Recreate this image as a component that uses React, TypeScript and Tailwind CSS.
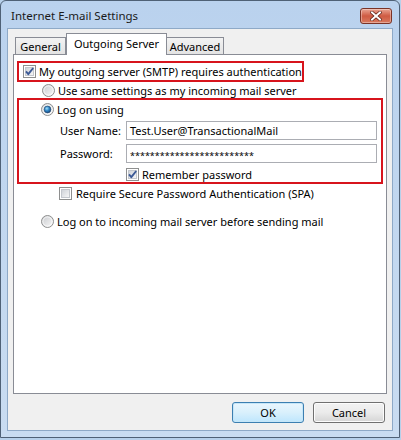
import React from 'react';

function CheckBox({ checked }: { checked?: boolean }) {
  return (
    <svg width="13" height="13" viewBox="0 0 13 13" className="shrink-0">
      <defs>
        <linearGradient id="cbInner" x1="0" y1="0" x2="1" y2="1">
          <stop offset="0" stopColor="#cdd1d7" />
          <stop offset="1" stopColor="#f8f8f8" />
        </linearGradient>
      </defs>
      <rect x="0.5" y="0.5" width="12" height="12" fill="#fff" stroke="#8e8f8f" />
      <rect x="2.5" y="2.5" width="8" height="8" fill="url(#cbInner)" stroke="#c3c7cd" />
      {checked && (
        <path d="M3 6.4 L5.3 9.2 L10.2 3" fill="none" stroke="#3c5a96" strokeWidth="1.9" strokeLinejoin="round" />
      )}
    </svg>
  );
}

function Radio({ checked }: { checked?: boolean }) {
  return (
    <svg width="13" height="13" viewBox="0 0 13 13" className="shrink-0">
      <defs>
        <linearGradient id="rbFill" x1="0" y1="0" x2="1" y2="1">
          <stop offset="0" stopColor="#c6c8cc" />
          <stop offset="1" stopColor="#fafafa" />
        </linearGradient>
        <radialGradient id="rbDot" cx="0.4" cy="0.35" r="0.75">
          <stop offset="0" stopColor="#a4e0fb" />
          <stop offset="0.45" stopColor="#2f86c6" />
          <stop offset="1" stopColor="#12386a" />
        </radialGradient>
      </defs>
      <circle cx="6.5" cy="6.5" r="6" fill="url(#rbFill)" stroke="#8e8f8f" />
      <circle cx="6.5" cy="6.5" r="4.6" fill="none" stroke="#ffffff" strokeOpacity="0.7" />
      {checked && <circle cx="6.5" cy="6.5" r="3.4" fill="url(#rbDot)" stroke="#23466f" strokeWidth="0.6" />}
    </svg>
  );
}

function CloseButton() {
  return (
    <div className="w-[32px] h-[16px] rounded-[3px] border border-[#7a3327] bg-gradient-to-b from-[#e8a493] via-[#cf5a42] to-[#d87a5f] flex items-center justify-center shadow-[inset_0_0_0_1px_rgba(255,255,255,0.35)]">
      <svg width="12" height="10" viewBox="0 0 12 10">
        <path d="M2 1.5 L10 8.5 M10 1.5 L2 8.5" stroke="#5a1f16" strokeWidth="3.4" strokeLinecap="square" />
        <path d="M2 1.5 L10 8.5 M10 1.5 L2 8.5" stroke="#ffffff" strokeWidth="2" strokeLinecap="square" />
      </svg>
    </div>
  );
}

function Button({ label, isDefault }: { label: string; isDefault?: boolean }) {
  return (
    <button
      className={`w-[72px] h-[21px] rounded-[3px] border text-[11px] text-black bg-gradient-to-b ${
        isDefault
          ? 'border-[#3c7fb1] from-[#eaf6fd] via-[#d9f0fc] to-[#bee6fd] shadow-[inset_0_0_0_1px_#c6e6f8]'
          : 'border-[#707070] from-[#f2f2f2] via-[#ebebeb] to-[#d5d5d5] shadow-[inset_0_0_0_1px_#fcfcfc]'
      }`}
    >
      {label}
    </button>
  );
}

export default function App() {
  return (
    <div className="w-[401px] h-[440px] bg-[#b7d0ea] font-['Noto_Sans',sans-serif] text-[11px] text-black leading-none whitespace-nowrap">
      <div className="w-[400px] h-[438px] border border-[#4f6176] rounded-t-[6px] bg-gradient-to-b from-[#bad2ee] to-[#c9dcf1] flex flex-col px-[6px] pb-[6px]">
        {/* title bar */}
        <div className="h-[27px] -mx-[6px] flex items-center pl-[10px] pr-[7px] pt-[3px]">
          <span className="text-[11.5px] text-[#1a1a1a]">Internet E-mail Settings</span>
          <div className="ml-auto self-start mt-[4px]">
            <CloseButton />
          </div>
        </div>

        {/* client area */}
        <div className="flex-1 border border-[#8ea9c7] bg-[#f0f0f0] flex flex-col pt-[4px]">
          {/* tabs */}
          <div className="h-[21px] flex items-end pl-[7px]">
            <div className="w-[51px] h-[17px] border border-b-0 border-[#898c95] bg-gradient-to-b from-[#f3f3f3] to-[#e3e3e3] flex items-center justify-center">
              General
            </div>
            <div className="relative z-10 w-[101px] h-[22px] -mb-px border border-b-0 border-[#898c95] bg-white flex items-center justify-center pb-[3px]">
              Outgoing Server
            </div>
            <div className="w-[57px] h-[17px] border border-b-0 border-l-0 border-[#898c95] bg-gradient-to-b from-[#f3f3f3] to-[#e3e3e3] flex items-center justify-center">
              Advanced
            </div>
          </div>

          {/* panel */}
          <div className="ml-[5px] w-[374px] h-[340px] border border-[#898c95] bg-white flex flex-col">
            <div className="ml-[3px] mt-[6px] w-[287px] h-[21px] border-2 border-[#d7141c] flex items-center gap-[3px] pl-[4px]">
              <CheckBox checked />
              <span>My outgoing server (SMTP) requires authentication</span>
            </div>

            <div className="ml-[28px] h-[16px] flex items-center gap-[3px]">
              <Radio />
              <span>Use same settings as my incoming mail server</span>
            </div>

            <div className="ml-[3px] w-[366px] h-[86px] border-2 border-[#d7141c] flex flex-col">
              <div className="mt-px h-[16px] pl-[22px] flex items-center gap-[3px]">
                <Radio checked />
                <span>Log on using</span>
              </div>
              <div className="mt-[4px] h-[19px] pl-[41px] flex items-center">
                <span className="w-[66px]">User Name:</span>
                <div className="w-[251px] h-[19px] border border-[#abadb3] flex items-center pl-[3px]">
                  Test.User@TransactionalMail
                </div>
              </div>
              <div className="mt-[4px] h-[19px] pl-[41px] flex items-center">
                <span className="w-[66px]">Password:</span>
                <div className="w-[251px] h-[19px] border border-[#abadb3] flex items-center pl-[3px] pt-[3px] text-[9px]">
                  *************************
                </div>
              </div>
              <div className="mt-[4px] h-[14px] pl-[107px] flex items-center gap-[3px]">
                <CheckBox checked />
                <span>Remember password</span>
              </div>
            </div>

            <div className="ml-[45px] mt-px h-[16px] flex items-center gap-[4px]">
              <CheckBox />
              <span>Require Secure Password Authentication (SPA)</span>
            </div>

            <div className="ml-[27px] mt-[12px] h-[16px] flex items-center gap-[3px]">
              <Radio />
              <span>Log on to incoming mail server before sending mail</span>
            </div>
          </div>

          {/* buttons */}
          <div className="mt-[8px] flex justify-end gap-[9px] pr-[7px]">
            <Button label="OK" isDefault />
            <Button label="Cancel" />
          </div>
        </div>
      </div>
    </div>
  );
}
